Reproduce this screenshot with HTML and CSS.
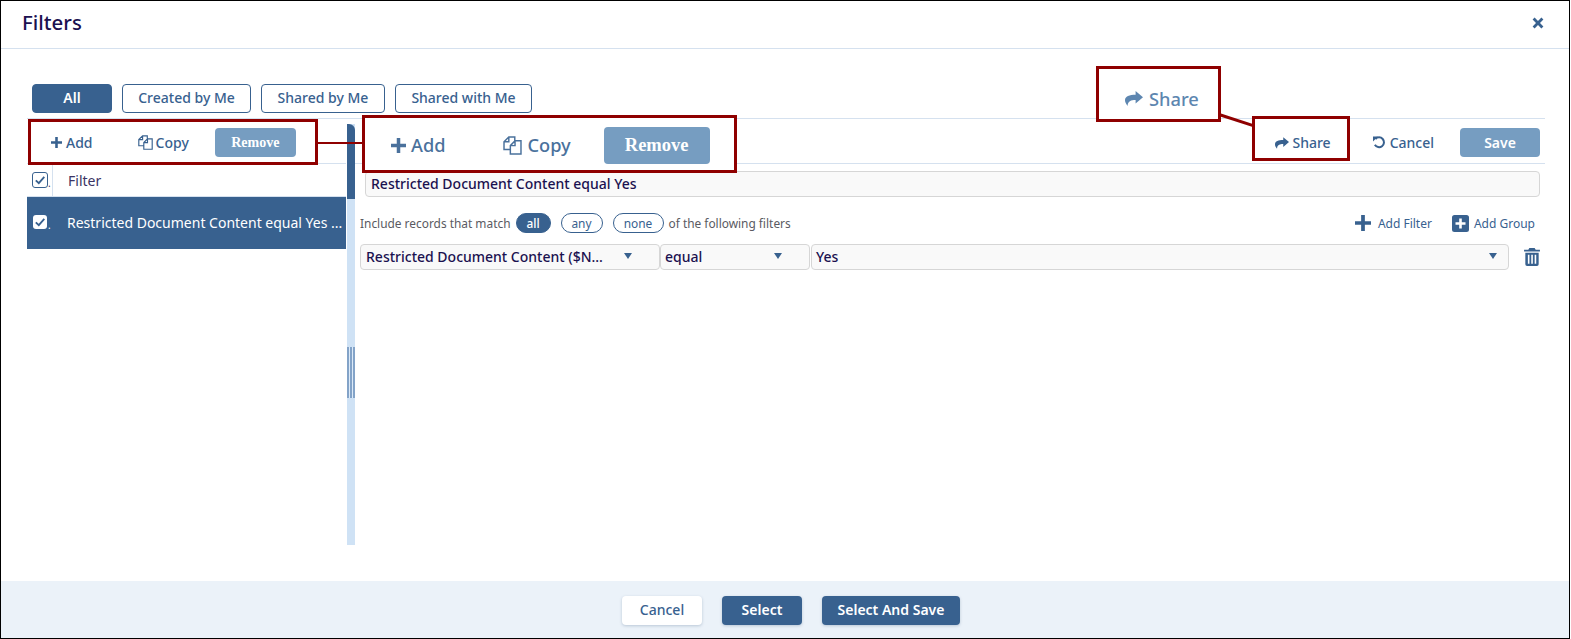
FILE: index.html
```html
<!DOCTYPE html>
<html lang="en">
<head>
<meta charset="utf-8">
<title>Filters</title>
<link rel="stylesheet" href="styles.css">
</head>
<body>
<svg class="defs" width="0" height="0" aria-hidden="true">
  <symbol id="i-plus" viewBox="0 0 12 12"><path d="M4.6 0h2.8v4.6H12v2.8H7.4V12H4.6V7.4H0V4.6h4.6z"/></symbol>
  <symbol id="i-copy" viewBox="0 0 15 15"><path fill="none" stroke="currentColor" stroke-width="1.15" d="M5.800 14.200V7.600L9.500 3.800H14.200V14.200zM9.500 3.800V7.600H5.800M5.800 10.700H.8V4.600L4.600 .8H9.300V3.900M4.600 .8V4.600H.8"/></symbol>
  <symbol id="i-share" viewBox="0 0 18 15"><path d="M10.6 0 18 6.300l-7.400 6.300V8.900C6 8.900 2.800 9.900 2.600 15 .8 12.600 0 10.800 0 9.300 0 5.300 4.500 3.900 10.600 3.800z"/></symbol>
  <symbol id="i-undo" viewBox="0 0 14 14"><path fill="none" stroke="currentColor" stroke-width="2.2" d="M2.600 3.200A5.300 5.300 0 1 1 2 9.500"/><path d="M0 .6 5.400 .6 0 6z"/></symbol>
  <symbol id="i-check" viewBox="0 0 14 14"><path fill="none" stroke="currentColor" stroke-width="1.8" d="M2.800 7.300 5.800 10.200 11.300 3.800"/></symbol>
  <symbol id="i-close" viewBox="0 0 12 12"><path d="M2.600.6 6 4 9.400.6l2 2L8 6l3.400 3.400-2 2L6 8l-3.400 3.400-2-2L4 6 .6 2.600z"/></symbol>
  <symbol id="i-trash" viewBox="0 0 15 17"><path fill-rule="evenodd" d="M5 0h5l1 1.600h4v1.800H0V1.600h4zM1.200 4.400h12.600V15.400a1.600 1.600 0 0 1-1.600 1.600H2.800a1.600 1.600 0 0 1-1.600-1.600zM3.600 6.400v8.400h1.500V6.400zM6.800 6.400v8.400h1.500V6.400zM10 6.400v8.400h1.500V6.400z"/></symbol>
  <symbol id="i-group" viewBox="0 0 17 17"><path fill-rule="evenodd" d="M2.500 0h12A2.500 2.500 0 0 1 17 2.500v12a2.500 2.500 0 0 1-2.500 2.500h-12A2.500 2.500 0 0 1 0 14.500v-12A2.500 2.500 0 0 1 2.500 0zM7.200 3.500v3.700H3.500v2.600h3.700v3.700h2.600V9.800h3.700V7.200H9.800V3.500z"/></symbol>
</svg>

<div class="dialog">
  <header class="title-bar">
    <h1 class="title">Filters</h1>
    <button class="close" aria-label="Close"><svg class="icon-close"><use href="#i-close"/></svg></button>
  </header>

  <main class="body">
    <nav class="tabs">
      <button class="tab tab-all">All</button>
      <button class="tab tab-created">Created by Me</button>
      <button class="tab tab-by">Shared by Me</button>
      <button class="tab tab-with">Shared with Me</button>
    </nav>

    <div class="panes">
      <section class="list-pane">
        <div class="toolbar list-toolbar">
          <span class="tool tool-add"><svg class="icon-plus"><use href="#i-plus"/></svg>Add</span>
          <span class="tool tool-copy"><svg class="icon-copy"><use href="#i-copy"/></svg>Copy</span>
          <button class="btn-remove">Remove</button>
        </div>
        <div class="list-head">
          <span class="check-cell"><span class="check check-outline"><svg><use href="#i-check"/></svg></span><span class="dot">.</span></span>
          <span class="list-head-label">Filter</span>
        </div>
        <div class="list-row">
          <span class="check-cell"><span class="check check-solid"><svg><use href="#i-check"/></svg></span><span class="dot">.</span></span>
          <span class="list-row-label">Restricted Document Content equal Yes ...</span>
        </div>
      </section>

      <div class="splitter">
        <div class="splitter-thumb"></div>
        <div class="splitter-grip"></div>
      </div>

      <section class="edit-pane">
        <div class="toolbar edit-toolbar">
          <span class="tool tool-share"><svg class="icon-share"><use href="#i-share"/></svg>Share</span>
          <span class="tool tool-cancel"><svg class="icon-undo"><use href="#i-undo"/></svg>Cancel</span>
          <button class="btn-save">Save</button>
        </div>
        <div class="name-input">Restricted Document Content equal Yes</div>
        <div class="match-row">
          <span class="match-text">Include records that match</span>
          <span class="pill pill-on">all</span>
          <span class="pill pill-any">any</span>
          <span class="pill pill-none">none</span>
          <span class="match-text match-tail">of the following filters</span>
          <span class="add-link add-filter"><svg class="icon-add-filter"><use href="#i-plus"/></svg>Add Filter</span>
          <span class="add-link add-group"><svg class="icon-add-group"><use href="#i-group"/></svg>Add Group</span>
        </div>
        <div class="rule-row">
          <div class="select select-field"><span>Restricted Document Content ($N...</span><i class="caret"></i></div>
          <div class="select select-op"><span>equal</span><i class="caret"></i></div>
          <div class="select select-value"><span>Yes</span><i class="caret"></i></div>
          <svg class="icon-trash"><use href="#i-trash"/></svg>
        </div>
      </section>
    </div>
  </main>

  <footer class="footer">
    <button class="foot-btn foot-cancel">Cancel</button>
    <button class="foot-btn foot-select">Select</button>
    <button class="foot-btn foot-save">Select And Save</button>
  </footer>

  <div class="callout-link link-toolbar"></div>
  <div class="callout-link link-share"></div>
  <div class="callout box-list"></div>
  <div class="callout box-zoom">
    <span class="zoom-tool zoom-add"><svg class="zoom-plus"><use href="#i-plus"/></svg>Add</span>
    <span class="zoom-tool zoom-copy"><svg class="zoom-copy-icon"><use href="#i-copy"/></svg>Copy</span>
    <span class="zoom-remove">Remove</span>
  </div>
  <div class="callout box-share-big"><svg class="zoom-share-icon"><use href="#i-share"/></svg><span>Share</span></div>
  <div class="callout box-share"></div>
</div>
</body>
</html>
```

FILE: styles.css
```css
* { box-sizing: border-box; }
html, body { margin: 0; padding: 0; background: #fff; }
body { font-family: "Noto Sans", "Open Sans", sans-serif; color: #1d1650; width: 1571px; height: 639px; overflow: hidden; }
button { font-family: inherit; cursor: pointer; }
svg { fill: currentColor; display: block; }
.defs { position: absolute; }

.dialog { position: relative; width: 1570px; height: 639px; border: 1px solid #000; display: flex; flex-direction: column; background: #fff; }

.title-bar { flex: none; height: 48px; border-bottom: 1px solid #d5e1ef; display: flex; align-items: center; justify-content: space-between; padding: 0 25px 5px 21px; }
.title { margin: 0; font-size: 20.400px; font-weight: 500; color: #1b1150; line-height: 26px; }
.close { border: 0; background: none; padding: 2px 0 0; color: #38618f; }
.icon-close { width: 12px; height: 12px; }

.body { flex: 1; min-height: 0; padding: 35px 24px 0 26px; display: flex; flex-direction: column; }

.tabs { flex: none; height: 29px; display: flex; gap: 10px; padding-left: 5px; margin-bottom: 5px; }
.tab { height: 29px; border: 1px solid #38618f; border-radius: 4px; background: #fff; color: #38618f; font-size: 14px; font-weight: 500; padding: 0 0 2px; }
.tab-all { width: 80px; background: #38618f; color: #fff; font-weight: 600; }
.tab-created { width: 129px; }
.tab-by { width: 124px; }
.tab-with { width: 137px; }

.panes { flex: 1; min-height: 0; display: flex; border-top: 1px solid #d5e1ef; }

.list-pane { flex: none; width: 319px; }
.toolbar { height: 45px; border-bottom: 1px solid #d5e1ef; display: flex; align-items: center; }
.tool { display: inline-flex; align-items: center; color: #38618f; font-size: 14px; font-weight: 500; }
.list-toolbar { padding-top: 3px; }
.tool-add { margin-left: 24px; }
.icon-plus { width: 11px; height: 11px; margin-right: 4px; }
.tool-copy { margin-left: 45px; }
.icon-copy { width: 15px; height: 15px; margin-right: 3px; }
.btn-remove { margin-left: 26px; width: 81px; height: 29px; border: 0; border-radius: 4px; background: #769dc1; color: #fff; font: 700 14px "Liberation Serif", serif; padding: 0; }

.list-head { height: 33px; display: flex; align-items: center; border-bottom: 1px solid #d5e1ef; font-size: 14px; color: #3b3464; }
.check-cell { flex: none; width: 26px; height: 100%; display: flex; align-items: center; padding-left: 5px; border-right: 1px solid #d5e1ef; font-size: 10px; }
.dot { margin-top: 6px; line-height: 10px; }
.check { flex: none; width: 16px; height: 16px; border-radius: 3px; display: block; }
.check svg { width: 14px; height: 14px; }
.check-outline { border: 1px solid #38618f; color: #38618f; }
.check-solid { width: 14px; height: 14px; margin: 0 1px; background: #fff; color: #38618f; }
.check-solid svg { width: 14px; height: 14px; }
.list-head-label { margin-left: 15px; }
.list-row { height: 52px; background: #38618f; color: #fff; display: flex; align-items: center; font-size: 14px; padding-bottom: 2px; }
.list-row .check-cell { border-right: 0; }
.list-row-label { margin-left: 14px; white-space: nowrap; }

.splitter { flex: none; width: 8px; height: 421px; margin: 5px 0 0 1px; background: #cfe2f5; position: relative; }
.splitter-thumb { height: 75px; background: #38618f; border-top-right-radius: 6px; }
.splitter-grip { position: absolute; top: 223px; left: 0; width: 8px; height: 51px; background: repeating-linear-gradient(90deg, #83a3c8 0 2px, #dceaf8 2px 3px); }

.edit-pane { flex: 1; min-width: 0; padding-left: 5px; }
.edit-toolbar { justify-content: flex-end; padding: 3px 5px 0 0; margin-left: -5px; }
.tool-share { margin-right: 42px; }
.icon-share { width: 14px; height: 12px; margin-right: 3px; }
.tool-cancel { margin-right: 26px; }
.icon-undo { width: 13px; height: 13px; margin-right: 4px; }
.btn-save { width: 80px; height: 29px; border: 0; border-radius: 4px; background: #769dc1; color: #fff; font-size: 14px; font-weight: 600; }

.name-input { height: 26px; margin: 7px 5px 0 5px; border: 1px solid #d6d6d6; border-radius: 4px; background: #f9f9f9; padding-left: 5px; font-size: 14px; font-weight: 500; line-height: 24px; color: #1b1150; }

.match-row { display: flex; align-items: center; height: 22px; margin-top: 15px; font-size: 11.900px; color: #5a5a62; }
.pill { height: 20px; border: 1px solid #38618f; border-radius: 10px; color: #38618f; display: inline-flex; align-items: center; justify-content: center; margin-left: 10px; }
.pill-on { background: #38618f; color: #fff; width: 35px; margin-left: 5px; font-weight: 500; }
.pill-any { width: 42px; }
.pill-none { width: 51px; }
.match-tail { margin-left: 5px; }
.add-link { display: inline-flex; align-items: center; color: #38618f; font-size: 12px; }
.add-filter { margin-left: auto; }
.icon-add-filter { width: 16px; height: 16px; margin-right: 7px; }
.add-group { margin-left: 20px; margin-right: 10px; }
.icon-add-group { width: 17px; height: 17px; margin-right: 5px; }

.rule-row { display: flex; align-items: center; height: 26px; margin-top: 10px; }
.select { height: 26px; border: 1px solid #d6d6d6; border-radius: 4px; background: #f9f9f9; display: flex; align-items: center; justify-content: space-between; font-size: 14px; font-weight: 500; color: #1b1150; white-space: nowrap; }
.select-field { flex: none; width: 300px; padding: 0 27px 2px 5px; }
.select-op { flex: none; width: 150px; margin-right: 1px; padding: 0 27px 2px 4px; }
.select-value { flex: none; width: 698px; padding: 0 11px 2px 4px; }
.caret { width: 0; height: 0; border-left: 4px solid transparent; border-right: 4px solid transparent; border-top: 6px solid #38618f; }
.icon-trash { flex: none; width: 16px; height: 18px; margin-left: 15px; color: #38618f; }

.footer { flex: none; height: 57px; background: #ebf2f9; display: flex; align-items: center; justify-content: center; gap: 20px; padding-left: 12px; padding-top: 2px; }
.foot-btn { height: 29px; border: 0; border-radius: 4px; font-size: 14px; font-weight: 600; padding: 0 0 2px; box-shadow: 0 1px 3px rgba(40, 70, 110, .25); }
.foot-cancel { width: 80px; background: #fff; color: #38618f; font-weight: 500; }
.foot-select { width: 80px; background: #38618f; color: #fff; }
.foot-save { width: 138px; background: #38618f; color: #fff; }

.callout { position: absolute; border: 3px solid #8f0000; background: transparent; }
.box-list { left: 27px; top: 118px; width: 290px; height: 46px; }
.box-zoom { left: 361px; top: 114px; width: 375px; height: 58px; background: #fff; display: flex; align-items: center; padding-top: 2px; }
.box-share-big { left: 1095px; top: 65px; width: 125px; height: 56px; background: #fff; display: flex; align-items: center; color: #5d86b0; font-size: 18.300px; font-weight: 500; padding: 9px 0 0 26px; }
.box-share { left: 1251px; top: 115px; width: 98px; height: 45px; }
.zoom-tool { display: inline-flex; align-items: center; color: #4a719c; font-size: 18.200px; font-weight: 500; }
.zoom-add { margin-left: 26px; }
.zoom-plus { width: 15px; height: 15px; margin-right: 5px; }
.zoom-copy { margin-left: 58px; }
.zoom-copy-icon { width: 19px; height: 19px; margin-right: 5px; }
.zoom-remove { margin-left: 33px; width: 106px; height: 37px; border-radius: 4px; background: #769dc1; color: #fff; font: 700 18.500px/37px "Liberation Serif", serif; text-align: center; }
.zoom-share-icon { width: 18px; height: 15px; margin-right: 6px; }

.callout-link { position: absolute; background: #8f0000; }
.link-toolbar { left: 316px; top: 141px; width: 46px; height: 2px; }
.link-share { left: 1218px; top: 112px; width: 36px; height: 3px; transform: rotate(18deg); transform-origin: 0 50%; }
```
